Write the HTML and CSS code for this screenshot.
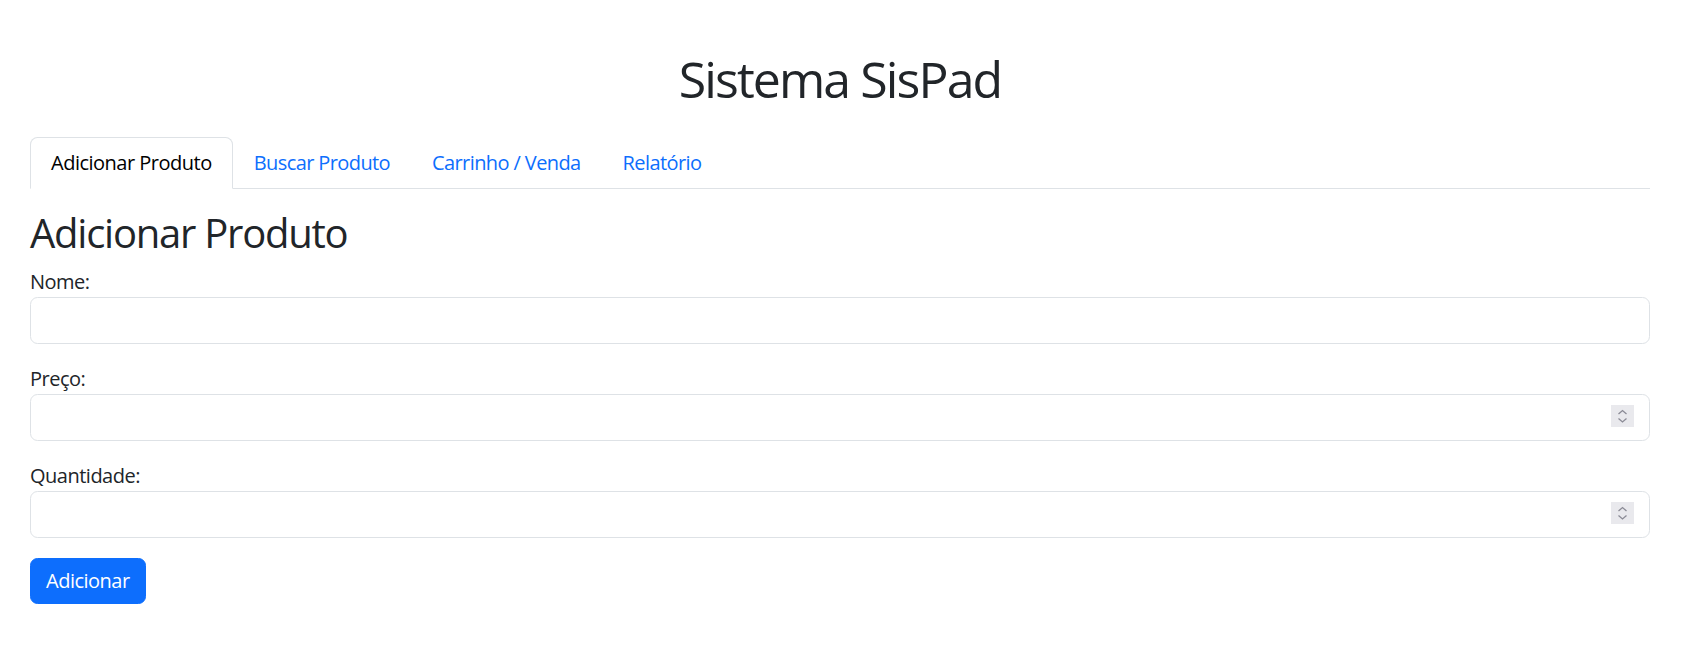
FILE: index.html
```html
<!DOCTYPE html>
<html lang="pt-BR">
<head>
<meta charset="utf-8">
<title>Sistema SisPad</title>
<link rel="stylesheet" href="styles.css">
</head>
<body>
<div class="page">
  <h1 class="title">Sistema SisPad</h1>
  <ul class="tabs">
    <li><a class="tab active" href="#">Adicionar Produto</a></li>
    <li><a class="tab" href="#">Buscar Produto</a></li>
    <li><a class="tab" href="#">Carrinho / Venda</a></li>
    <li><a class="tab" href="#">Relatório</a></li>
  </ul>
  <section class="panel">
    <h2 class="panel-title">Adicionar Produto</h2>
    <form class="form">
      <div class="group">
        <label class="label" for="nome">Nome:</label>
        <input class="field" id="nome" type="text">
      </div>
      <div class="group">
        <label class="label" for="preco">Preço:</label>
        <div class="numwrap">
          <input class="field" id="preco" type="text">
          <span class="spin"><svg width="23" height="22" viewBox="0 0 23 22"><path d="M7.5 9 L11.5 5.5 L15.5 9" fill="none" stroke="#8b8b96" stroke-width="1.3"/><path d="M7.5 13.5 L11.5 17 L15.5 13.5" fill="none" stroke="#8b8b96" stroke-width="1.3"/></svg></span>
        </div>
      </div>
      <div class="group">
        <label class="label" for="qtd">Quantidade:</label>
        <div class="numwrap">
          <input class="field" id="qtd" type="text">
          <span class="spin"><svg width="23" height="22" viewBox="0 0 23 22"><path d="M7.5 9 L11.5 5.5 L15.5 9" fill="none" stroke="#8b8b96" stroke-width="1.3"/><path d="M7.5 13.5 L11.5 17 L15.5 13.5" fill="none" stroke="#8b8b96" stroke-width="1.3"/></svg></span>
        </div>
      </div>
      <button class="btn" type="button">Adicionar</button>
    </form>
  </section>
</div>
</body>
</html>
```

FILE: styles.css
```css
* { box-sizing: border-box; }
html, body { margin: 0; padding: 0; background: #fff; }
body {
  font-family: "Open Sans", "Noto Sans", sans-serif;
  font-size: 20px;
  line-height: 30px;
  color: #212529;
  letter-spacing: -0.025em;
}
.page {
  padding: 49px 32px 0 30px;
}
.title {
  margin: 0 0 28px 0;
  font-size: 50px;
  line-height: 60px;
  font-weight: 400;
  text-align: center;
  letter-spacing: -0.038em;
}
.tabs {
  display: flex;
  margin: 0;
  padding: 0;
  list-style: none;
  border-bottom: 1px solid #dee2e6;
}
.tab {
  display: block;
  padding: 10px 20px;
  margin-bottom: -1px;
  border: 1px solid transparent;
  border-radius: 7.5px 7.5px 0 0;
  color: #0d6efd;
  text-decoration: none;
  font-size: 20px;
  line-height: 30px;
  letter-spacing: -0.03em;
}
.tab.active {
  color: #000;
  background: #fff;
  border-color: #dee2e6 #dee2e6 #fff;
  letter-spacing: -0.025em;
}
.panel { padding-top: 20px; }
.panel-title {
  margin: 0 0 10px 0;
  font-size: 40px;
  line-height: 48px;
  font-weight: 400;
  letter-spacing: -0.031em;
}
.form { display: flex; flex-direction: column; align-items: flex-start; }
.group { width: 100%; margin-bottom: 20px; }
.label { display: block; line-height: 30px; }
.numwrap { position: relative; }
.field {
  display: block;
  width: 100%;
  height: 47px;
  padding: 7px 15px;
  font-family: inherit;
  font-size: 20px;
  color: #212529;
  background: #fff;
  border: 1px solid #dee2e6;
  border-radius: 7.5px;
  outline: none;
}
.spin {
  position: absolute;
  right: 16px;
  top: 11px;
  width: 23px;
  height: 22px;
  background: #e9e9ed;
  display: flex;
}
.btn {
  font-family: inherit;
  font-size: 20px;
  line-height: 30px;
  letter-spacing: -0.025em;
  color: #fff;
  background: #0d6efd;
  border: 1px solid #0d6efd;
  border-radius: 7.5px;
  padding: 7px 15px;
  cursor: pointer;
}
```
